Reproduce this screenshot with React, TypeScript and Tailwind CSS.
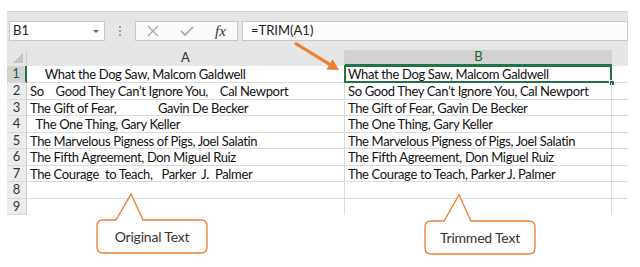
import React from "react";

const rowsA = [
  "     What the Dog Saw, Malcom Galdwell",
  "So    Good They Can\u2019t Ignore You,    Cal Newport",
  "The Gift of Fear,              Gavin De Becker",
  "  The One Thing, Gary Keller",
  "The Marvelous Pigness of Pigs, Joel Salatin",
  "The Fifth Agreement, Don Miguel Ruiz",
  "The Courage  to Teach,   Parker  J.  Palmer",
  "",
  "",
];

const rowsB = [
  "What the Dog Saw, Malcom Galdwell",
  "So Good They Can\u2019t Ignore You, Cal Newport",
  "The Gift of Fear, Gavin De Becker",
  "The One Thing, Gary Keller",
  "The Marvelous Pigness of Pigs, Joel Salatin",
  "The Fifth Agreement, Don Miguel Ruiz",
  "The Courage to Teach, Parker J. Palmer",
  "",
  "",
];

const heights = [17, 17, 16, 17, 16, 17, 16, 17, 16];

function Callout({ label, left, top }: { label: string; left: number; top: number }) {
  return (
    <div className="absolute w-[114px] h-[64px]" style={{ left, top }}>
      <svg width="114" height="64" className="absolute inset-0">
        <path
          d="M 8 28 L 21 28 L 36 2 L 48 28 L 106 28 Q 112 28 112 34 L 112 55 Q 112 61 106 61 L 8 61 Q 2 61 2 55 L 2 34 Q 2 28 8 28 Z"
          fill="white"
          stroke="#ed7d31"
          strokeWidth="1.3"
        />
      </svg>
      <div className="absolute left-[2px] top-[28px] w-[110px] h-[33px] flex items-center justify-center text-[14px] tracking-[-0.2px] text-[#333]">
        {label}
      </div>
    </div>
  );
}

export default function App() {
  return (
    <div className="relative w-[640px] h-[267px] bg-white overflow-hidden font-['Lato','Liberation_Sans',sans-serif]">
      <div className="h-[11px]" />

      {/* formula bar */}
      <div className="ml-[7px] w-[621px] bg-[#e6e6e6] border-t border-[#d4d4d4] pt-[9px] pb-[9px] pl-[2px] flex items-center">
        <div className="w-[96px] h-[20px] bg-white border border-[#c8c8c8] flex items-center justify-between pl-[3px] pr-[5px] text-[13px] text-[#222]">
          <span>B1</span>
          <span className="w-0 h-0 border-l-[3px] border-r-[3px] border-t-[3px] border-l-transparent border-r-transparent border-t-[#666]" />
        </div>
        <div className="w-[30px] flex flex-col items-center gap-[2px]">
          <span className="w-[2px] h-[2px] bg-[#a0a0a0]" />
          <span className="w-[2px] h-[2px] bg-[#a0a0a0]" />
          <span className="w-[2px] h-[2px] bg-[#a0a0a0]" />
        </div>
        <div className="w-[103px] h-[20px] bg-[#fafafa] border border-[#c8c8c8] flex items-center pl-[11px] gap-[21px]">
          <svg width="12" height="12" viewBox="0 0 12 12">
            <path d="M1 1 L11 11 M11 1 L1 11" stroke="#a6a6a6" strokeWidth="1.2" />
          </svg>
          <svg width="14" height="12" viewBox="0 0 14 12">
            <path d="M1 6 L5 10 L13 2" stroke="#a6a6a6" strokeWidth="1.6" fill="none" />
          </svg>
          <span className="font-['Liberation_Serif',serif] italic text-[15px] text-[#333] leading-none">fx</span>
        </div>
        <div className="ml-[4px] flex-1 h-[20px] bg-[#fcfcfc] border border-[#c8c8c8] flex items-center pl-[8px] text-[13px] text-[#222]">
          =TRIM(A1)
        </div>
      </div>

      {/* column headers */}
      <div className="ml-[7px] flex h-[16px] text-[13px]">
        <div className="w-[20px] bg-[#e6e6e6] border-r border-[#cfcfcf] relative">
          <svg width="12" height="12" className="absolute right-[2px] bottom-[2px]">
            <path d="M11 1 L11 11 L1 11 Z" fill="#c4c4c4" />
          </svg>
        </div>
        <div className="w-[318px] bg-[#e6e6e6] border-r border-[#cfcfcf] flex items-center justify-center text-[#333]">A</div>
        <div className="w-[267px] bg-[#d2d2d2] border-b-2 border-[#217346] flex items-center justify-center text-[#1e5e3a]">B</div>
        <div className="w-[16px] bg-[#e6e6e6]" />
      </div>

      {/* rows */}
      <div className="ml-[7px] flex flex-col text-[13px] text-[#111]">
        {rowsA.map((a, i) => (
          <div key={i} className="flex" style={{ height: heights[i] }}>
            <div
              className={
                i === 0
                  ? "w-[20px] bg-[#d2d2d2] border-r-2 border-[#217346] border-b border-b-[#dadada] flex items-center justify-center text-[#1e5e3a]"
                  : "w-[20px] bg-[#ececec] border-r border-[#cfcfcf] border-b border-b-[#dadada] flex items-center justify-center text-[#333]"
              }
            >
              {i + 1}
            </div>
            <div
              className={
                i === 8
                  ? "w-[318px] border-r border-[#dadada] pl-[3px] whitespace-pre leading-[16px] tracking-[-0.35px]"
                  : "w-[318px] border-r border-b border-[#dadada] pl-[3px] whitespace-pre leading-[16px] tracking-[-0.35px]"
              }
            >
              {a}
            </div>
            <div
              className={
                i === 8
                  ? "relative w-[267px] border-r border-[#dadada] pl-[3px] whitespace-pre leading-[16px] tracking-[-0.35px]"
                  : "relative w-[267px] border-r border-b border-[#dadada] pl-[3px] whitespace-pre leading-[16px] tracking-[-0.35px]"
              }
            >
              {rowsB[i]}
              {i === 0 && (
                <>
                  <div className="absolute -left-px -top-px -right-px -bottom-px border-2 border-[#217346]" />
                  <div className="absolute -right-[4px] -bottom-[4px] w-[6px] h-[6px] bg-[#217346] border border-white" />
                </>
              )}
            </div>
            <div className={i === 8 ? "w-[16px]" : "w-[16px] border-b border-[#dadada]"} />
          </div>
        ))}
      </div>

      {/* arrow */}
      <svg width="640" height="267" className="absolute left-0 top-0 pointer-events-none">
        <line x1="295" y1="43" x2="330" y2="64.6" stroke="#ed7d31" strokeWidth="3" />
        <path d="M 339 70 L 326.5 69.6 L 332.6 59.2 Z" fill="#ed7d31" />
      </svg>

      <Callout label="Original Text" left={95} top={192} />
      <Callout label="Trimmed Text" left={423} top={193} />
    </div>
  );
}
